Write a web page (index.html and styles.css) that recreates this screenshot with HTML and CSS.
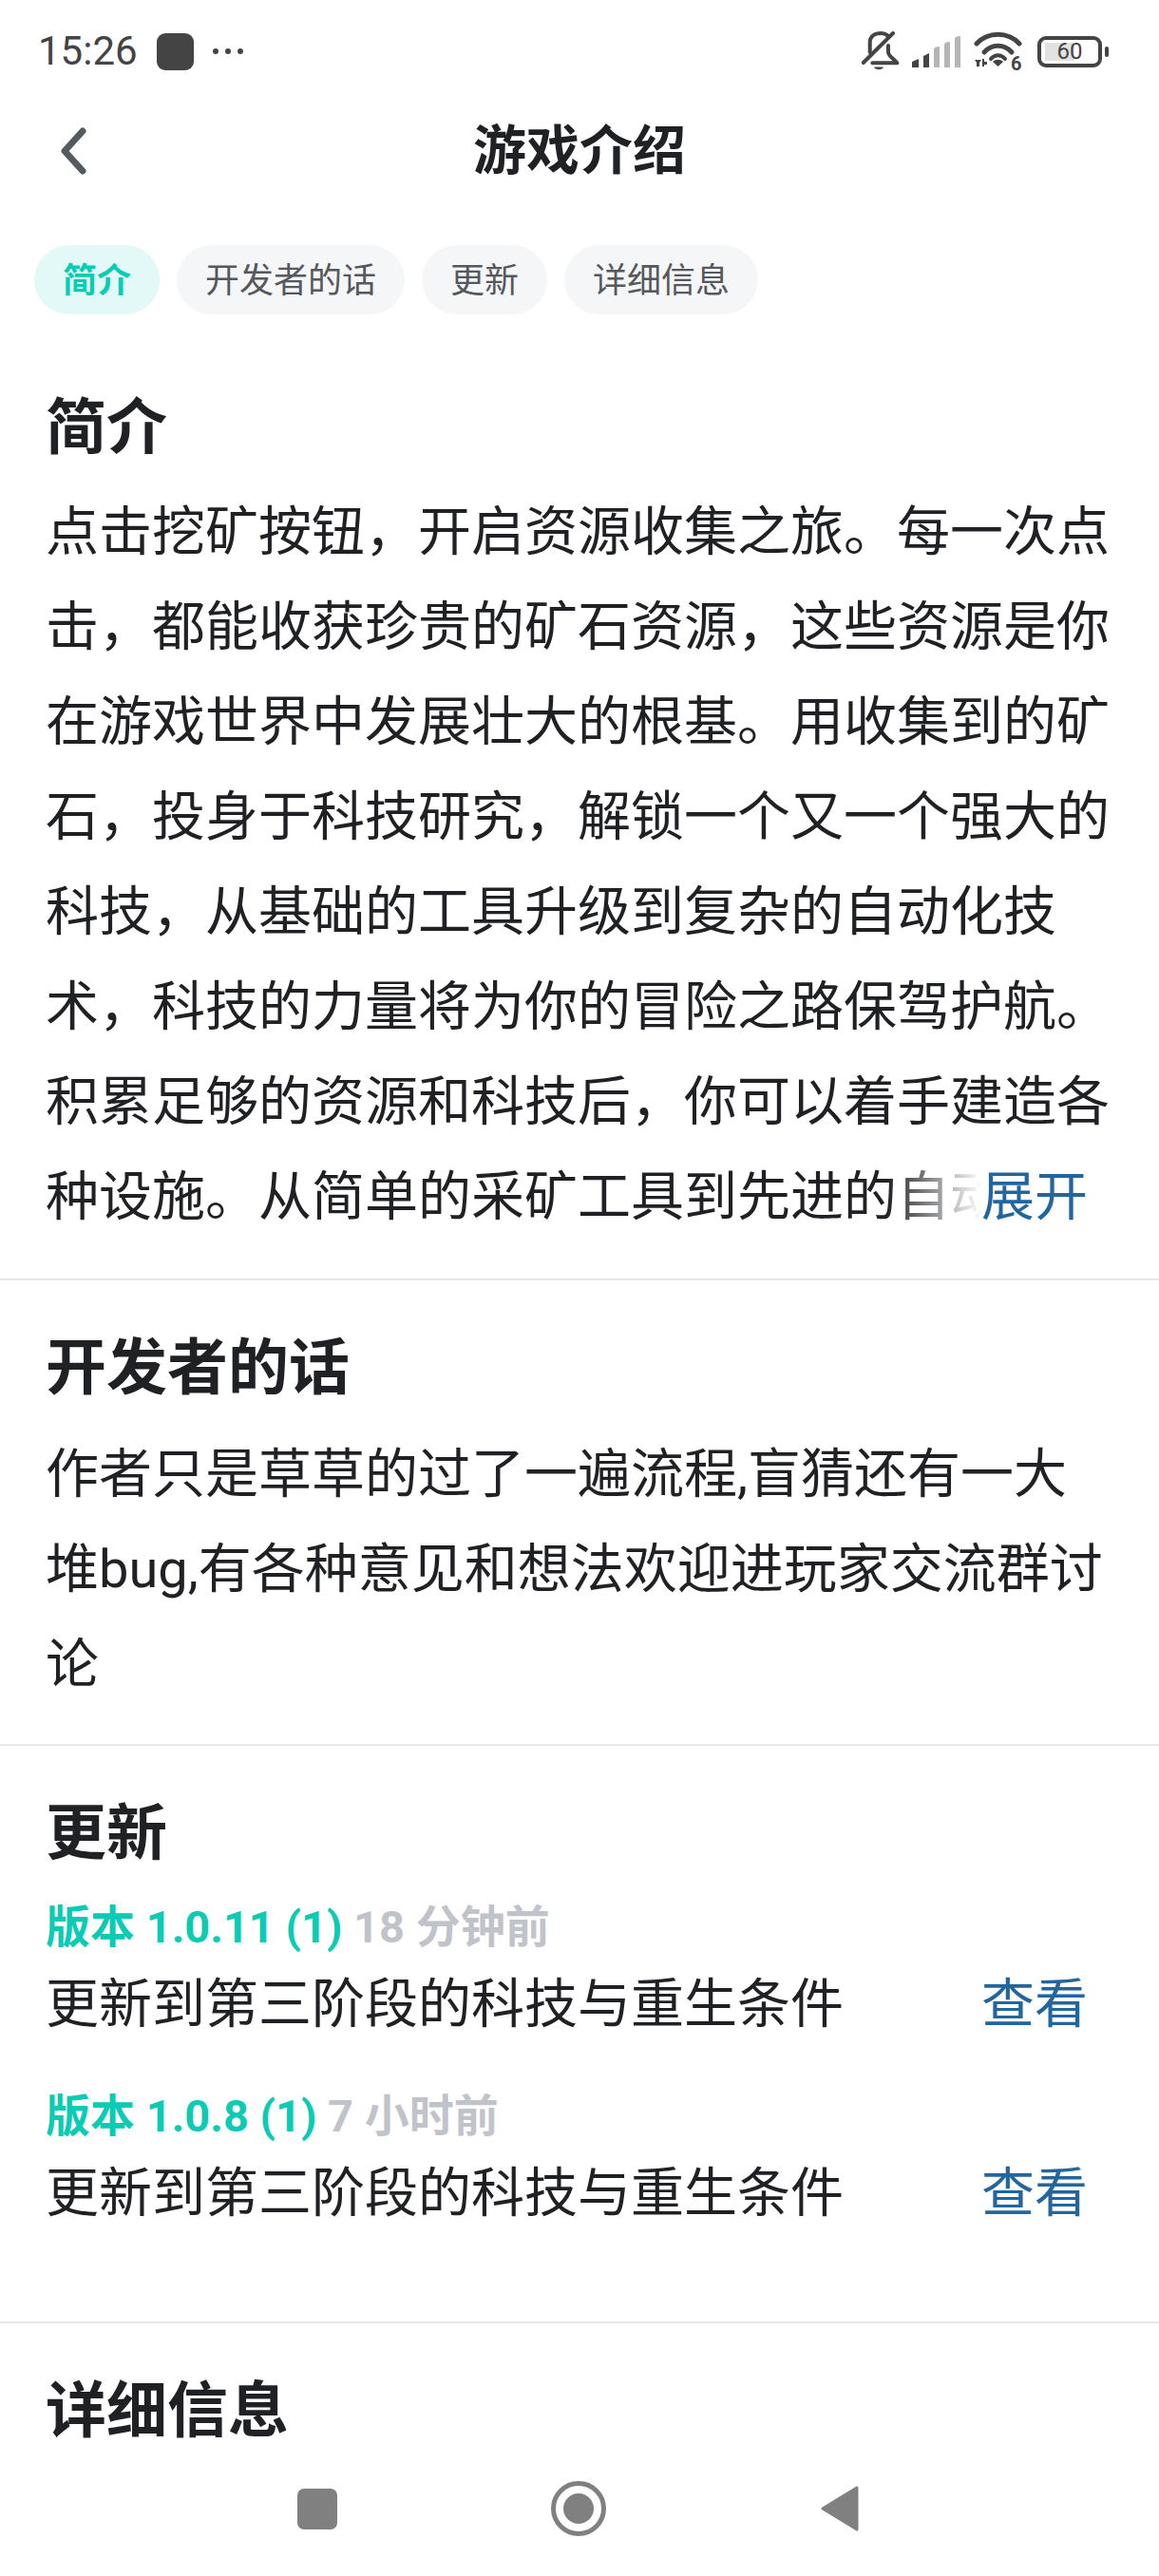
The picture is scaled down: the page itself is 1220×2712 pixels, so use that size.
FILE: index.html
```html
<!DOCTYPE html>
<html lang="zh-CN">
<head>
    <meta charset="UTF-8">
    <meta name="viewport" content="width=device-width, initial-scale=1.0">
    <title>游戏介绍</title>
    <link rel="stylesheet" href="styles.css">
</head>
<body>
    <!-- Status bar -->
    <div class="status-bar">
        <div class="status-left">
            <span class="status-time">15:26</span>
            <span class="status-app"></span>
            <svg class="status-dots" width="32" height="8" viewBox="0 0 32 8"><circle cx="3" cy="4" r="3"/><circle cx="16" cy="4" r="3"/><circle cx="29" cy="4" r="3"/></svg>
        </div>
        <div class="status-right">
            <svg class="icon-bell" width="40" height="42" viewBox="0 0 40 42" fill="none" stroke="#444" stroke-width="4" stroke-linecap="round" stroke-linejoin="round">
                <path d="M8.7 22V12C8.7 5 14 2 20 2C23 2 26 3 28 5"/>
                <path d="M28 15V21.7C28 26 34 29 37.3 33.3H11.3"/>
                <path d="M1.8 33L33 2"/>
                <path fill="#444" stroke="none" d="M13 37.5H23C22 41 14 41 13 37.5Z"/>
            </svg>
            <svg class="icon-signal" width="52" height="34" viewBox="0 0 52 34">
                <path fill="#444" d="M0 34V28L7 25V34Z"/>
                <path fill="#444" d="M12 34V22L18 19V34Z"/>
                <path fill="#b5b5b5" d="M23 34V15C23 13 25 12 29 12V34Z"/>
                <path fill="#b5b5b5" d="M34 34V10C34 8 36 7 40 7V34Z"/>
                <path fill="#b5b5b5" d="M45 34V4C45 2 47 1 51 1V34Z"/>
            </svg>
            <svg class="icon-wifi" width="60" height="44" viewBox="0 0 60 44">
                <g fill="none" stroke="#444" stroke-width="5" stroke-linecap="round">
                    <path d="M3 14C15 1 36 1 48 14"/>
                    <path d="M11 23C19 14 32 14 40 23"/>
                    <path d="M18 30C22 25 29 25 33 30" stroke-width="4"/>
                </g>
                <path fill="#444" d="M20 33C23 30 28 30 31 33L25.5 38Z"/>
                <path fill="#444" d="M1 31H8L6 34V38H3V34ZM9 30H11V33H14V36H11V38H9Z"/>
                <text class="wifi-six" x="39" y="42">6</text>
            </svg>
            <div class="battery">
                <div class="battery-body">
                    <span class="battery-fill"></span>
                    <span class="battery-num">60</span>
                </div>
                <span class="battery-nub"></span>
            </div>
        </div>
    </div>

    <!-- Header -->
    <div class="header">
        <svg class="back-icon" width="32" height="50" viewBox="0 0 32 50" fill="none" stroke="#555a60" stroke-width="7" stroke-linecap="round" stroke-linejoin="round"><path d="M26 4L7 25L26 46"/></svg>
        <h1 class="header-title">游戏介绍</h1>
    </div>

    <!-- Tabs -->
    <div class="tabs">
        <span class="tab tab-active">简介</span>
        <span class="tab">开发者的话</span>
        <span class="tab">更新</span>
        <span class="tab">详细信息</span>
    </div>

    <div class="content">
        <div class="section intro">
            <h2 class="section-title">简介</h2>
            <div class="intro-text">
                <p class="para intro-clip">点击挖矿按钮，开启资源收集之旅。每一次点击，都能收获珍贵的矿石资源，这些资源是你在游戏世界中发展壮大的根基。用收集到的矿石，投身于科技研究，解锁一个又一个强大的科技，从基础的工具升级到复杂的自动化技术，科技的力量将为你的冒险之路保驾护航。积累足够的资源和科技后，你可以着手建造各种设施。从简单的采矿工具到先进的自动</p>
                <div class="expand"><span class="expand-fade"></span><span class="link expand-link">展开</span></div>
            </div>
        </div>

        <div class="section dev">
            <h2 class="section-title">开发者的话</h2>
            <p class="para">作者只是草草的过了一遍流程,盲猜还有一大堆bug,有各种意见和想法欢迎进玩家交流群讨论</p>
        </div>

        <div class="section updates">
            <h2 class="section-title">更新</h2>
            <div class="update">
                <div class="update-meta"><span class="update-version">版本 1.0.11 (1)</span> <span class="update-time">18 分钟前</span></div>
                <div class="update-row"><span>更新到第三阶段的科技与重生条件</span><span class="link">查看</span></div>
            </div>
            <div class="update">
                <div class="update-meta"><span class="update-version">版本 1.0.8 (1)</span> <span class="update-time">7 小时前</span></div>
                <div class="update-row"><span>更新到第三阶段的科技与重生条件</span><span class="link">查看</span></div>
            </div>
        </div>

        <div class="section details">
            <h2 class="section-title">详细信息</h2>
        </div>
    </div>

    <!-- Navigation bar -->
    <div class="nav-bar">
        <span class="nav-square"></span>
        <svg width="60" height="60" viewBox="0 0 60 60"><circle cx="30" cy="30" r="26.5" fill="none" stroke="#808080" stroke-width="5"/><circle cx="30" cy="30" r="16" fill="#808080"/></svg>
        <svg width="42" height="50" viewBox="0 0 42 50"><path fill="#808080" stroke="#808080" stroke-width="3" stroke-linejoin="round" d="M39 3V47L3 25Z"/></svg>
    </div>
</body>
</html>
```

FILE: styles.css
```css
* {
    box-sizing: border-box;
}

html, body {
    margin: 0;
    padding: 0;
}

body {
    width: 1220px;
    height: 2712px;
    display: flex;
    flex-direction: column;
    overflow: hidden;
    background-color: #fff;
    color: #1f2124;
    font-family: Roboto, "Noto Sans CJK SC", sans-serif;
}

/* status bar */
.status-bar {
    height: 108px;
    flex-shrink: 0;
    display: flex;
    align-items: center;
    justify-content: space-between;
    padding: 0 53px 0 40px;
}

.status-left, .status-right {
    display: flex;
    align-items: center;
}

.status-time {
    font-size: 42px;
    color: #444;
    line-height: 1;
}

.status-app {
    width: 39px;
    height: 39px;
    margin-left: 20px;
    border-radius: 9px;
    background-color: #444;
}

.status-dots {
    margin-left: 20px;
    fill: #444;
}

.icon-bell {
    margin-right: 13px;
}

.icon-signal {
    margin-right: 13px;
}

.icon-wifi {
    margin-right: 7px;
}

.wifi-six {
    font-size: 20px;
    font-weight: 700;
    fill: #444;
    font-family: Roboto, sans-serif;
}

.battery {
    display: flex;
    align-items: center;
}

.battery-body {
    position: relative;
    width: 68px;
    height: 33px;
    border: 4px solid #444;
    border-radius: 9px;
    display: flex;
    align-items: center;
    justify-content: center;
}

.battery-fill {
    position: absolute;
    left: 4px;
    top: 3px;
    bottom: 3px;
    width: 31px;
    background-color: #e2e2e2;
}

.battery-num {
    position: relative;
    font-size: 24px;
    line-height: 1;
    color: #444;
}

.battery-nub {
    width: 4px;
    height: 11px;
    margin-left: 3px;
    border-radius: 2px;
    background-color: #444;
}

/* header */
.header {
    position: relative;
    height: 102px;
    flex-shrink: 0;
    display: flex;
    align-items: center;
    justify-content: center;
}

.back-icon {
    position: absolute;
    left: 61px;
    top: 26px;
}

.header-title {
    margin: 0;
    font-size: 56px;
    font-weight: 700;
    line-height: 1;
}

/* tabs */
.tabs {
    display: flex;
    gap: 18px;
    margin-top: 48px;
    padding-left: 36px;
    flex-shrink: 0;
}

.tab {
    height: 73px;
    padding: 0 30px;
    border-radius: 37px;
    background-color: #f5f6f8;
    color: #55585d;
    font-size: 36px;
    line-height: 76px;
}

.tab-active {
    background-color: #e2f9f7;
    color: #0ccbb4;
    font-weight: 700;
}

/* sections */
.content {
    flex: 1;
    overflow: hidden;
}

.section {
    padding: 42px 48px 34px;
    border-bottom: 2px solid #e5e8ec;
}

.section:last-child {
    border-bottom: none;
}

.intro {
    padding-top: 69px;
    padding-bottom: 36px;
}

.section-title {
    margin: 0;
    font-size: 64px;
    font-weight: 700;
    line-height: 102px;
    height: 100px;
}

.para {
    margin: 12px 0 0;
    font-size: 56px;
    line-height: 100px;
}

.intro-text {
    position: relative;
}

.intro-clip {
    margin-top: 10px;
}

.expand {
    position: absolute;
    right: 0;
    bottom: 0;
    height: 100px;
    display: flex;
}

.expand-fade {
    width: 100px;
    background: linear-gradient(to right, rgba(255, 255, 255, 0), #fff);
}

.expand-link {
    padding-right: 27px;
    background-color: #fff;
    line-height: 100px;
    font-size: 56px;
}

.link {
    color: #22669f;
}

.updates {
    padding-bottom: 85px;
}

.update {
    margin-top: 19px;
}

.update + .update {
    margin-top: 38px;
}

.update-meta {
    font-size: 47px;
    font-weight: 700;
    line-height: 60px;
}

.update-version {
    color: #0ccbb4;
}

.update-time {
    color: #c0c4ca;
}

.update-row {
    display: flex;
    justify-content: space-between;
    margin-top: 1px;
    padding-right: 27px;
    font-size: 56px;
    line-height: 100px;
}

/* navigation bar */
.nav-bar {
    height: 122px;
    flex-shrink: 0;
    display: flex;
    align-items: center;
    background-color: #fff;
    padding: 0 315px 20px 313px;
    justify-content: space-between;
}

.nav-square {
    width: 42px;
    height: 43px;
    border-radius: 7px;
    background-color: #808080;
}
```
